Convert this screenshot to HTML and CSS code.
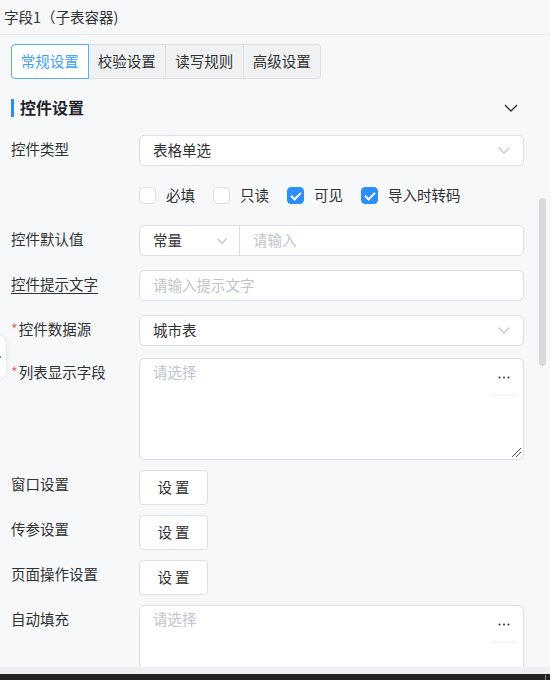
FILE: index.html
```html
<!DOCTYPE html>
<html lang="zh-CN">
<head>
  <meta charset="UTF-8" />
  <title>字段属性</title>
  <meta name="viewport" content="width=device-width, initial-scale=1.0" />
  <link rel="stylesheet" href="styles.css">
</head>
<body>

  <div class="panel">
    <div class="panel-title">字段1（子表容器)</div>

    <!-- 属性分组 -->
    <div class="tabs">
      <div class="tab active">常规设置</div>
      <div class="tab">校验设置</div>
      <div class="tab">读写规则</div>
      <div class="tab">高级设置</div>
    </div>

    <div class="section-head">
      <span class="section-title">控件设置</span>
      <svg class="collapse" width="14" height="8" viewBox="0 0 14 8">
        <polyline points="1,1 7,7 13,1" fill="none" stroke="#303133" stroke-width="1.4" />
      </svg>
    </div>

    <div class="form">
      <div class="row">
        <label class="label">控件类型</label>
        <div class="control select">
          <span>表格单选</span>
          <svg class="arrow" width="12" height="7" viewBox="0 0 12 7"><polyline points="0.5,0.5 6,6 11.5,0.5" /></svg>
        </div>
      </div>

      <div class="row">
        <label class="label"></label>
        <div class="checks">
          <span class="check"><i class="box"></i>必填</span>
          <span class="check"><i class="box"></i>只读</span>
          <span class="check"><i class="box checked"></i>可见</span>
          <span class="check"><i class="box checked"></i>导入时转码</span>
        </div>
      </div>

      <div class="row">
        <label class="label">控件默认值</label>
        <div class="control group">
          <div class="group-type">
            <span>常量</span>
            <svg class="arrow" width="10" height="6" viewBox="0 0 10 6"><polyline points="0.5,0.5 5,5.5 9.5,0.5" /></svg>
          </div>
          <span class="placeholder group-input">请输入</span>
        </div>
      </div>

      <div class="row">
        <label class="label underline">控件提示文字</label>
        <div class="control"><span class="placeholder">请输入提示文字</span></div>
      </div>

      <div class="row row-tight">
        <label class="label"><em>*</em>控件数据源</label>
        <div class="control select">
          <span>城市表</span>
          <svg class="arrow" width="12" height="7" viewBox="0 0 12 7"><polyline points="0.5,0.5 6,6 11.5,0.5" /></svg>
        </div>
      </div>

      <div class="row row-area">
        <label class="label"><em>*</em>列表显示字段</label>
        <div class="area">
          <span class="placeholder">请选择</span>
          <div class="more">
            <svg width="12" height="3" viewBox="0 0 12 3"><circle cx="1.5" cy="1.5" r="1" /><circle cx="6" cy="1.5" r="1" /><circle cx="10.5" cy="1.5" r="1" /></svg>
          </div>
          <svg class="resize" width="10" height="10" viewBox="0 0 10 10">
            <line x1="1" y1="10" x2="10" y2="1" />
            <line x1="5" y1="10" x2="10" y2="5" />
          </svg>
        </div>
      </div>

      <div class="row row-btn">
        <label class="label">窗口设置</label>
        <button class="btn">设 置</button>
      </div>
      <div class="row row-btn">
        <label class="label">传参设置</label>
        <button class="btn">设 置</button>
      </div>
      <div class="row row-btn">
        <label class="label">页面操作设置</label>
        <button class="btn">设 置</button>
      </div>

      <div class="row row-area">
        <label class="label">自动填充</label>
        <div class="area">
          <span class="placeholder">请选择</span>
          <div class="more">
            <svg width="12" height="3" viewBox="0 0 12 3"><circle cx="1.5" cy="1.5" r="1" /><circle cx="6" cy="1.5" r="1" /><circle cx="10.5" cy="1.5" r="1" /></svg>
          </div>
        </div>
      </div>
    </div>

    <!-- 滚动条与侧边拉手 -->
    <div class="scroll-thumb"></div>
    <div class="side-handle"><i></i></div>
  </div>

  <div class="hbar"></div>
  <div class="statusbar"><i></i></div>

</body>
</html>
```

FILE: styles.css
```css
html, body {
  margin: 0;
  height: 100%;
}
body {
  font-family: "Noto Sans CJK SC", "Noto Sans", sans-serif;
  font-size: 14.5px;
  color: #303133;
  background: #f7f8fa;
  display: flex;
  flex-direction: column;
  overflow: hidden;
}
.panel {
  position: relative;
  height: 667px;
  overflow: hidden;
  background: #f7f8fa;
}
.panel-title {
  height: 34px;
  line-height: 33px;
  padding: 0 4px;
  border-bottom: 1px solid #e8eaee;
  color: #303133;
}

/* 分组标签 */
.tabs {
  display: flex;
  margin: 9px 0 0 11px;
}
.tab {
  box-sizing: border-box;
  height: 35px;
  line-height: 31px;
  width: 77.5px;
  text-align: center;
  background: #f0f1f3;
  border: 1px solid #dcdfe6;
  border-left: none;
  color: #303133;
}
.tab:first-child {
  border-left: 1px solid #dcdfe6;
  border-radius: 4px 0 0 4px;
}
.tab:last-child {
  border-radius: 0 4px 4px 0;
}
.tab.active {
  background: #fff;
  color: #409eff;
  border: 1px solid #5aa9ff;
}

.section-head {
  display: flex;
  align-items: center;
  justify-content: space-between;
  height: 26px;
  margin: 16px 32px 0 11px;
}
.section-title {
  font-size: 16px;
  font-weight: bold;
  color: #1f2329;
  border-left: 3px solid #2c8ef8;
  padding-left: 6px;
  line-height: 17px;
  padding-bottom: 1px;
}

.form {
  margin: 14px 26px 0 11px;
}
.row {
  display: flex;
  align-items: flex-start;
  margin-bottom: 14px;
}
.row-tight {
  margin-bottom: 12px;
}
.row-area,
.row-btn {
  margin-bottom: 10px;
}
.label {
  width: 128px;
  flex: none;
  line-height: 28px;
  color: #303133;
}
.label em {
  font-style: normal;
  color: #f56c6c;
  margin-right: 1px;
}
.underline {
  text-decoration: underline;
  text-underline-offset: 3px;
}

.control {
  flex: 1;
  box-sizing: border-box;
  height: 31px;
  display: flex;
  align-items: center;
  padding: 0 13px 3px;
  background: #fff;
  border: 1px solid #dcdfe6;
  border-radius: 5px;
}
.select {
  justify-content: space-between;
}
.select .arrow {
  margin-top: 3px;
}
.arrow polyline {
  fill: none;
  stroke: #c0c4cc;
  stroke-width: 1.2;
}
.placeholder {
  color: #c0c4cc;
}

.group {
  padding: 0;
}
.group-type {
  box-sizing: border-box;
  width: 100px;
  height: 100%;
  display: flex;
  align-items: center;
  justify-content: space-between;
  padding: 0 12px 3px 13px;
  border-right: 1px solid #dcdfe6;
}
.group-type .arrow {
  margin-top: 3px;
}
.group-input {
  padding: 0 0 3px 13px;
}

/* 复选框 */
.checks {
  display: flex;
  align-items: center;
  height: 31px;
}
.check {
  display: flex;
  align-items: center;
  margin-right: 18px;
  line-height: 20px;
  padding-bottom: 2px;
}
.box {
  box-sizing: border-box;
  width: 17px;
  height: 17px;
  margin: 2px 10px 0 0;
  border: 1px solid #dcdfe6;
  border-radius: 4px;
  background: #fff;
  position: relative;
}
.box.checked {
  background: #2c8ef8;
  border-color: #2c8ef8;
}
.box.checked::after {
  content: "";
  position: absolute;
  left: 5px;
  top: 2px;
  width: 4px;
  height: 8px;
  border: solid #fff;
  border-width: 0 2px 2px 0;
  transform: rotate(45deg);
}

/* 多行选择框 */
.area {
  flex: 1;
  position: relative;
  box-sizing: border-box;
  height: 102px;
  padding: 2px 13px;
  line-height: 22px;
  background: #fff;
  border: 1px solid #dcdfe6;
  border-radius: 5px;
}
.more {
  position: absolute;
  top: 1px;
  right: 2px;
  width: 34px;
  height: 34px;
  display: flex;
  align-items: center;
  justify-content: center;
  background: #fff;
  border-radius: 0 4px 6px 6px;
  box-shadow: 0 3px 3px -2px rgba(0, 0, 0, 0.06);
}
.more circle {
  fill: #303133;
}
.resize {
  position: absolute;
  right: 2px;
  bottom: 2px;
}
.resize line {
  stroke: #555;
  stroke-width: 1;
}

.btn {
  box-sizing: border-box;
  width: 69px;
  height: 35px;
  padding: 0 0 3px;
  font-family: inherit;
  font-size: 14.5px;
  color: #303133;
  background: #fff;
  border: 1px solid #dcdfe6;
  border-radius: 4px;
  cursor: pointer;
}

.scroll-thumb {
  position: absolute;
  left: 539px;
  top: 198px;
  width: 7px;
  height: 168px;
  border-radius: 4px;
  background: #d9dadf;
}
.side-handle {
  position: absolute;
  left: -8px;
  top: 335px;
  width: 14px;
  height: 44px;
  background: #fff;
  border-radius: 0 8px 8px 0;
  box-shadow: 0 0 4px rgba(0, 0, 0, 0.12);
}
.side-handle i {
  position: absolute;
  left: 8px;
  top: 21px;
  width: 1px;
  height: 2px;
  background: #409eff;
}

.hbar {
  height: 7px;
  background: #eef0f3;
}
.statusbar {
  position: relative;
  flex: 1;
  background: #232323;
}
.statusbar i {
  position: absolute;
  left: 545px;
  top: 1px;
  width: 1px;
  height: 5px;
  background: #888;
}
```
